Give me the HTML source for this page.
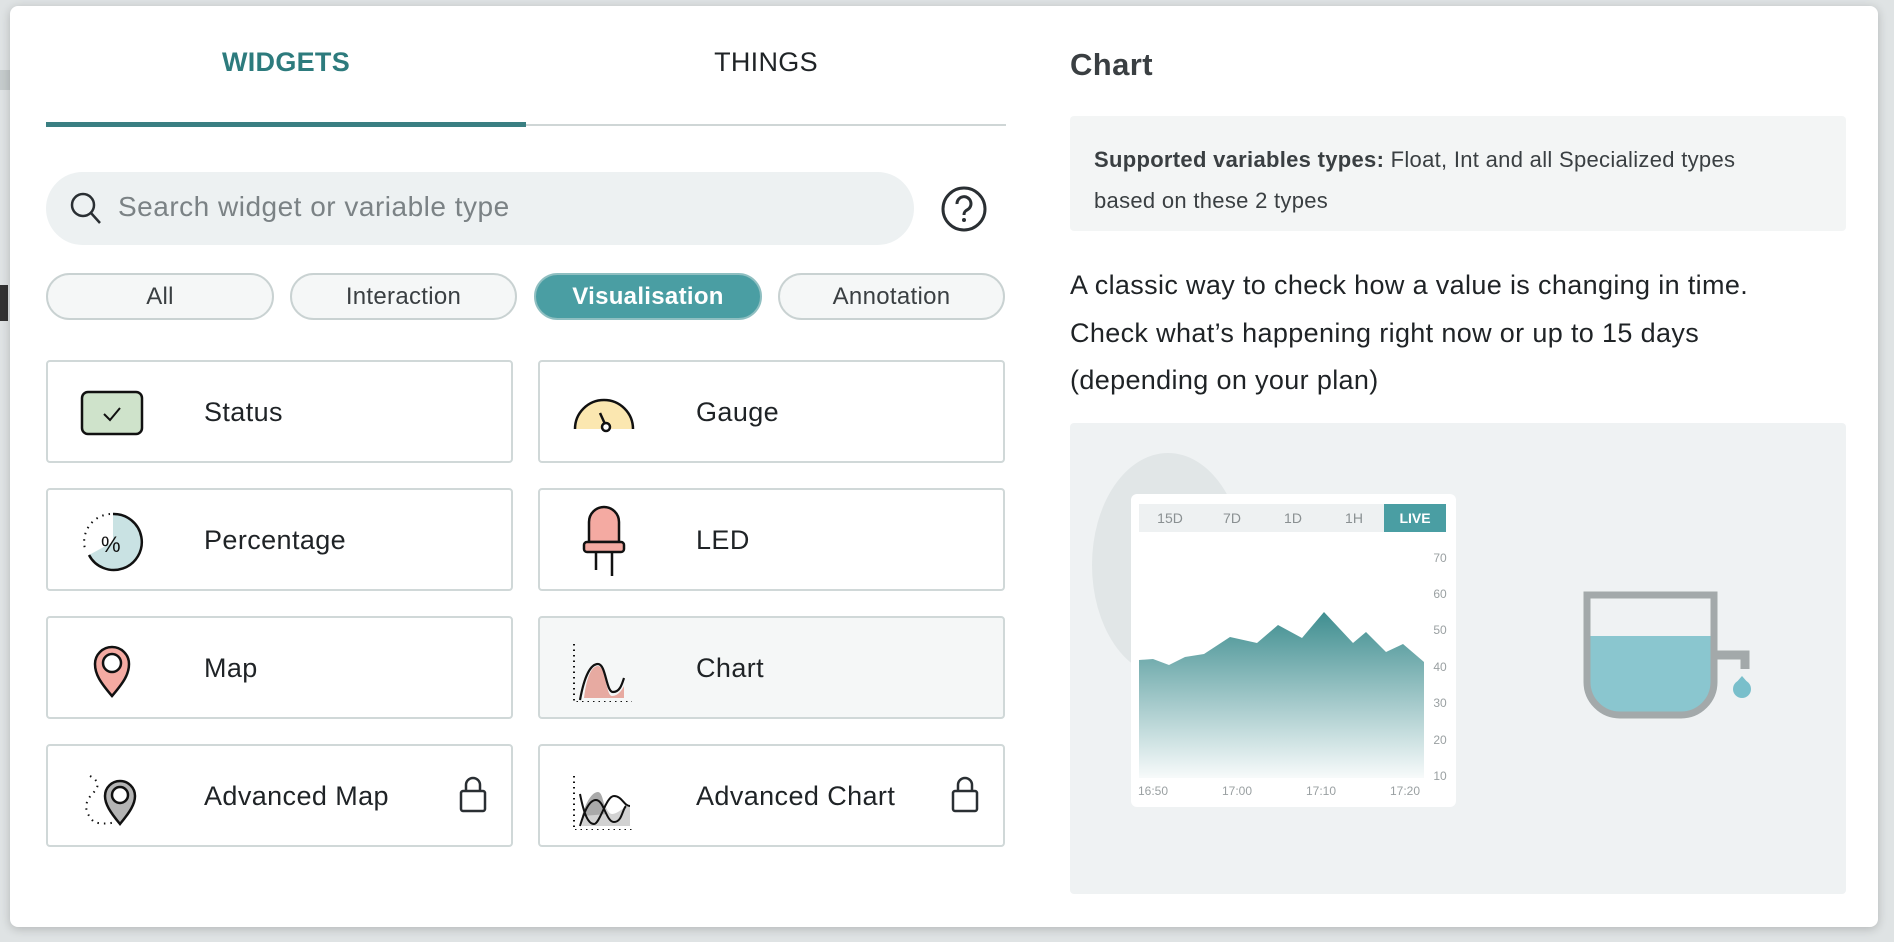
<!DOCTYPE html>
<html><head><meta charset="utf-8"><style>
*{box-sizing:border-box;margin:0;padding:0}
body{width:1894px;height:942px;background:#dfe3e4;font-family:"Liberation Sans",sans-serif;position:relative;overflow:hidden;color:#1f2326}
.modal{position:absolute;left:10px;top:6px;width:1868px;height:921px;background:#fff;border-radius:8px;box-shadow:0 2px 10px rgba(0,0,0,.2)}
.a{position:absolute}
.tab{position:absolute;top:46px;font-size:27px;text-align:center;width:480px;letter-spacing:0.3px}
.chip{position:absolute;top:273px;height:47px;border:2px solid #c9d2d2;border-radius:24px;background:#f5f7f7;font-size:24px;letter-spacing:0.3px;text-align:center;line-height:43px;color:#3a3f42}
.card{position:absolute;width:467px;height:103px;border:2px solid #d0d8d8;border-radius:4px;background:#fff;font-size:27px;letter-spacing:0.4px}
.card span{position:absolute;left:156px;top:35px}
.card svg.ic{position:absolute;left:32px;top:20px}
svg.lock{position:absolute;left:410px;top:28px}
</style></head><body>
<div class="a" style="left:0;top:70px;width:10px;height:20px;background:#c5cbcc"></div>
<div class="a" style="left:0;top:285px;width:8px;height:36px;background:#333"></div>
<div class="modal"></div>
<div class="tab" style="left:46px;top:47px;color:#2d7b7d;font-weight:bold">WIDGETS</div>
<div class="tab" style="left:526px;top:47px;color:#1f2326">THINGS</div>
<div class="a" style="left:46px;top:124px;width:960px;height:2px;background:#cfd6d6"></div>
<div class="a" style="left:46px;top:122px;width:480px;height:5px;background:#3a7f82"></div>
<div class="a" style="left:46px;top:172px;width:868px;height:73px;border-radius:37px;background:#edf1f2"></div>
<svg class="a" style="left:68px;top:190px" width="36" height="38" viewBox="0 0 36 38"><circle cx="15" cy="15" r="11" fill="none" stroke="#2a2f33" stroke-width="2.5"/><path d="M23 23l9 10" stroke="#2a2f33" stroke-width="2.5"/></svg>
<div class="a" style="left:118px;top:191px;font-size:28px;letter-spacing:0.5px;color:#7b8285">Search widget or variable type</div>
<svg class="a" style="left:940px;top:185px" width="48" height="48" viewBox="0 0 48 48"><circle cx="24" cy="24" r="21" fill="none" stroke="#2a2f33" stroke-width="3"/><path d="M17 19a7 7 0 1 1 10 6c-2 1-3 2-3 5" fill="none" stroke="#2a2f33" stroke-width="3"/><circle cx="24" cy="35" r="2" fill="#2a2f33"/></svg>
<div class="chip" style="left:46px;width:228px">All</div>
<div class="chip" style="left:290px;width:227px">Interaction</div>
<div class="chip" style="left:534px;width:228px;background:#4a9ea3;border-color:#8fbfc1;color:#fff;font-weight:bold">Visualisation</div>
<div class="chip" style="left:778px;width:227px">Annotation</div>

<div class="card" style="left:46px;top:360px"><svg class="ic" width="64" height="64" viewBox="0 0 64 64"><rect x="2" y="10" width="60" height="42" rx="6" fill="#cfe3cb" stroke="#111" stroke-width="2.5"/><path d="M24 32l6 6 10-12" fill="none" stroke="#111" stroke-width="2"/></svg><span>Status</span></div>
<div class="card" style="left:538px;top:360px"><svg class="ic" width="64" height="64" viewBox="0 0 64 64"><path d="M3 47a29 29 0 0 1 58 0z" fill="#fbe7b0"/><path d="M3 47a29 29 0 0 1 58 0" fill="none" stroke="#111" stroke-width="2.5"/><path d="M28 31l5 11" stroke="#111" stroke-width="2.5"/><circle cx="34" cy="45" r="4" fill="#fff" stroke="#111" stroke-width="2.5"/></svg><span>Gauge</span></div>
<div class="card" style="left:46px;top:488px"><svg class="ic" width="64" height="64" viewBox="0 0 64 64"><path d="M33 4a28 28 0 1 1-24 41L33 32z" fill="#c9e2e3"/><path d="M33 4a28 28 0 1 1-24 41" fill="none" stroke="#111" stroke-width="2.5"/><path d="M30 4a28 28 0 0 0-24 38" fill="none" stroke="#111" stroke-width="2" stroke-dasharray="1.5 5"/><text x="21" y="42" font-size="22" font-family="Liberation Sans" fill="#111">%</text></svg><span>Percentage</span></div>
<div class="card" style="left:538px;top:488px"><svg class="ic" width="64" height="72" viewBox="0 0 64 72" style="top:14px"><path d="M17 38V18a15 15 0 0 1 30 0v20z" fill="#f4aaa2" stroke="#111" stroke-width="2.5"/><rect x="12" y="38" width="40" height="10" rx="3" fill="#f4aaa2" stroke="#111" stroke-width="2.5"/><path d="M24 48v18M40 48v24" stroke="#111" stroke-width="2.5"/></svg><span>LED</span></div>
<div class="card" style="left:46px;top:616px"><svg class="ic" width="64" height="64" viewBox="0 0 64 64"><path d="M32 58C20 44 15 36 15 26a17 17 0 0 1 34 0c0 10-5 18-17 32z" fill="#f4aaa2" stroke="#111" stroke-width="2.5"/><circle cx="32" cy="25" r="9" fill="#fff" stroke="#111" stroke-width="2.5"/></svg><span>Map</span></div>
<div class="card" style="left:538px;top:616px;background:#f5f7f7"><svg class="ic" width="64" height="64" viewBox="0 0 64 64"><path d="M12 60c2-16 6-32 14-32s8 30 14 30 10-6 12-10v12z" fill="#e7aaa1"/><path d="M8 62c4-22 10-36 18-36s8 28 15 28 9-8 11-14" fill="none" stroke="#111" stroke-width="2.2"/><path d="M2 6v58h58" fill="none" stroke="#111" stroke-width="2" stroke-dasharray="1.5 4"/></svg><span>Chart</span></div>
<div class="card" style="left:46px;top:744px"><svg class="ic" width="64" height="64" viewBox="0 0 64 64"><path d="M40 58C30 46 25 38 25 30a15 15 0 0 1 30 0c0 8-5 16-15 28z" fill="#b4b4b4" stroke="#111" stroke-width="2.5"/><circle cx="40" cy="29" r="8" fill="#fff" stroke="#111" stroke-width="2.5"/><path d="M10 10c8 4 10 10 4 16s-14 16 0 30c6 2 14 2 22 0" fill="none" stroke="#111" stroke-width="2" stroke-dasharray="1.5 5"/></svg><span>Advanced Map</span><svg class="lock" width="30" height="40" viewBox="0 0 30 40"><rect x="3" y="17" width="24" height="20" rx="2" fill="none" stroke="#2a2f33" stroke-width="2.5"/><path d="M8 17v-6a7 7 0 0 1 14 0v6" fill="none" stroke="#2a2f33" stroke-width="2.5"/></svg></div>
<div class="card" style="left:538px;top:744px"><svg class="ic" width="64" height="64" viewBox="0 0 64 64"><path d="M10 60c2-18 10-30 16-30s8 18 14 18 12-8 18-8v20z" fill="#d2d2d2"/><path d="M10 50c4-14 10-24 16-24s6 22 10 22" fill="#aaa"/><path d="M8 28c4 20 8 30 14 30s12-28 20-28 10 10 16 10M8 60c3-10 8-26 16-26s10 22 18 22 8-12 12-16" fill="none" stroke="#111" stroke-width="2"/><path d="M2 10v54h58" fill="none" stroke="#111" stroke-width="2" stroke-dasharray="1.5 4"/></svg><span>Advanced Chart</span><svg class="lock" width="30" height="40" viewBox="0 0 30 40"><rect x="3" y="17" width="24" height="20" rx="2" fill="none" stroke="#2a2f33" stroke-width="2.5"/><path d="M8 17v-6a7 7 0 0 1 14 0v6" fill="none" stroke="#2a2f33" stroke-width="2.5"/></svg></div>

<div class="a" style="left:1070px;top:47px;font-size:31px;font-weight:bold;color:#3a3f42;letter-spacing:0.4px">Chart</div>
<div class="a" style="left:1070px;top:116px;width:776px;height:115px;background:#f3f5f5;border-radius:4px;padding:23px 24px;font-size:22px;letter-spacing:0.3px;line-height:41px;color:#3a3f42"><b>Supported variables types:</b> Float, Int and all Specialized types<br>based on these 2 types</div>
<div class="a" style="left:1070px;top:262px;width:800px;font-size:27px;letter-spacing:0.35px;line-height:47.5px;color:#1f2326">A classic way to check how a value is changing in time.<br>Check what’s happening right now or up to 15 days<br>(depending on your plan)</div>
<div class="a" style="left:1070px;top:423px;width:776px;height:471px;background:#eff2f3;border-radius:4px;overflow:hidden">
<svg width="776" height="471" viewBox="1070 423 776 471">
<defs><linearGradient id="g" x1="0" y1="0" x2="0" y2="1"><stop offset="0" stop-color="#3f8e90"/><stop offset="1" stop-color="#3f8e90" stop-opacity="0.04"/></linearGradient></defs>
<ellipse cx="1168" cy="565" rx="76" ry="112" fill="#e1e6e7"/>
<rect x="1131" y="494" width="325" height="313" rx="6" fill="#fff"/>
<rect x="1139" y="504" width="307" height="28" fill="#eef1f2"/>
<rect x="1384" y="504" width="62" height="28" fill="#4a9ea3"/>
<g font-family="Liberation Sans" font-size="14" fill="#8a9092" text-anchor="middle"><text x="1170" y="523">15D</text><text x="1232" y="523">7D</text><text x="1293" y="523">1D</text><text x="1354" y="523">1H</text><text x="1415" y="523" fill="#fff" font-weight="bold">LIVE</text></g>
<path d="M1139 660L1153 659 1169 665 1185 657 1204 654 1230 637 1257 643 1278 625 1302 638 1324 612 1353 643 1366 632 1386 652 1403 644 1424 662V778H1139z" fill="url(#g)"/>
<g font-family="Liberation Sans" font-size="12" fill="#9aa0a2" text-anchor="middle"><text x="1440" y="562">70</text><text x="1440" y="598">60</text><text x="1440" y="634">50</text><text x="1440" y="671">40</text><text x="1440" y="707">30</text><text x="1440" y="744">20</text><text x="1440" y="780">10</text><text x="1153" y="795">16:50</text><text x="1237" y="795">17:00</text><text x="1321" y="795">17:10</text><text x="1405" y="795">17:20</text></g>
<path d="M1590 636h121v50a26 26 0 0 1-26 26h-69a26 26 0 0 1-26-26z" fill="#8ac6cf"/>
<path d="M1587 595h127v87a33 33 0 0 1-33 33h-61a33 33 0 0 1-33-33z" fill="none" stroke="#a3a9aa" stroke-width="7"/>
<path d="M1717 655h28v14" fill="none" stroke="#a3a9aa" stroke-width="9"/>
<circle cx="1742" cy="689" r="9" fill="#79bfcb"/><path d="M1742 676l-7 8h14z" fill="#79bfcb"/>
</svg></div>
</body></html>
